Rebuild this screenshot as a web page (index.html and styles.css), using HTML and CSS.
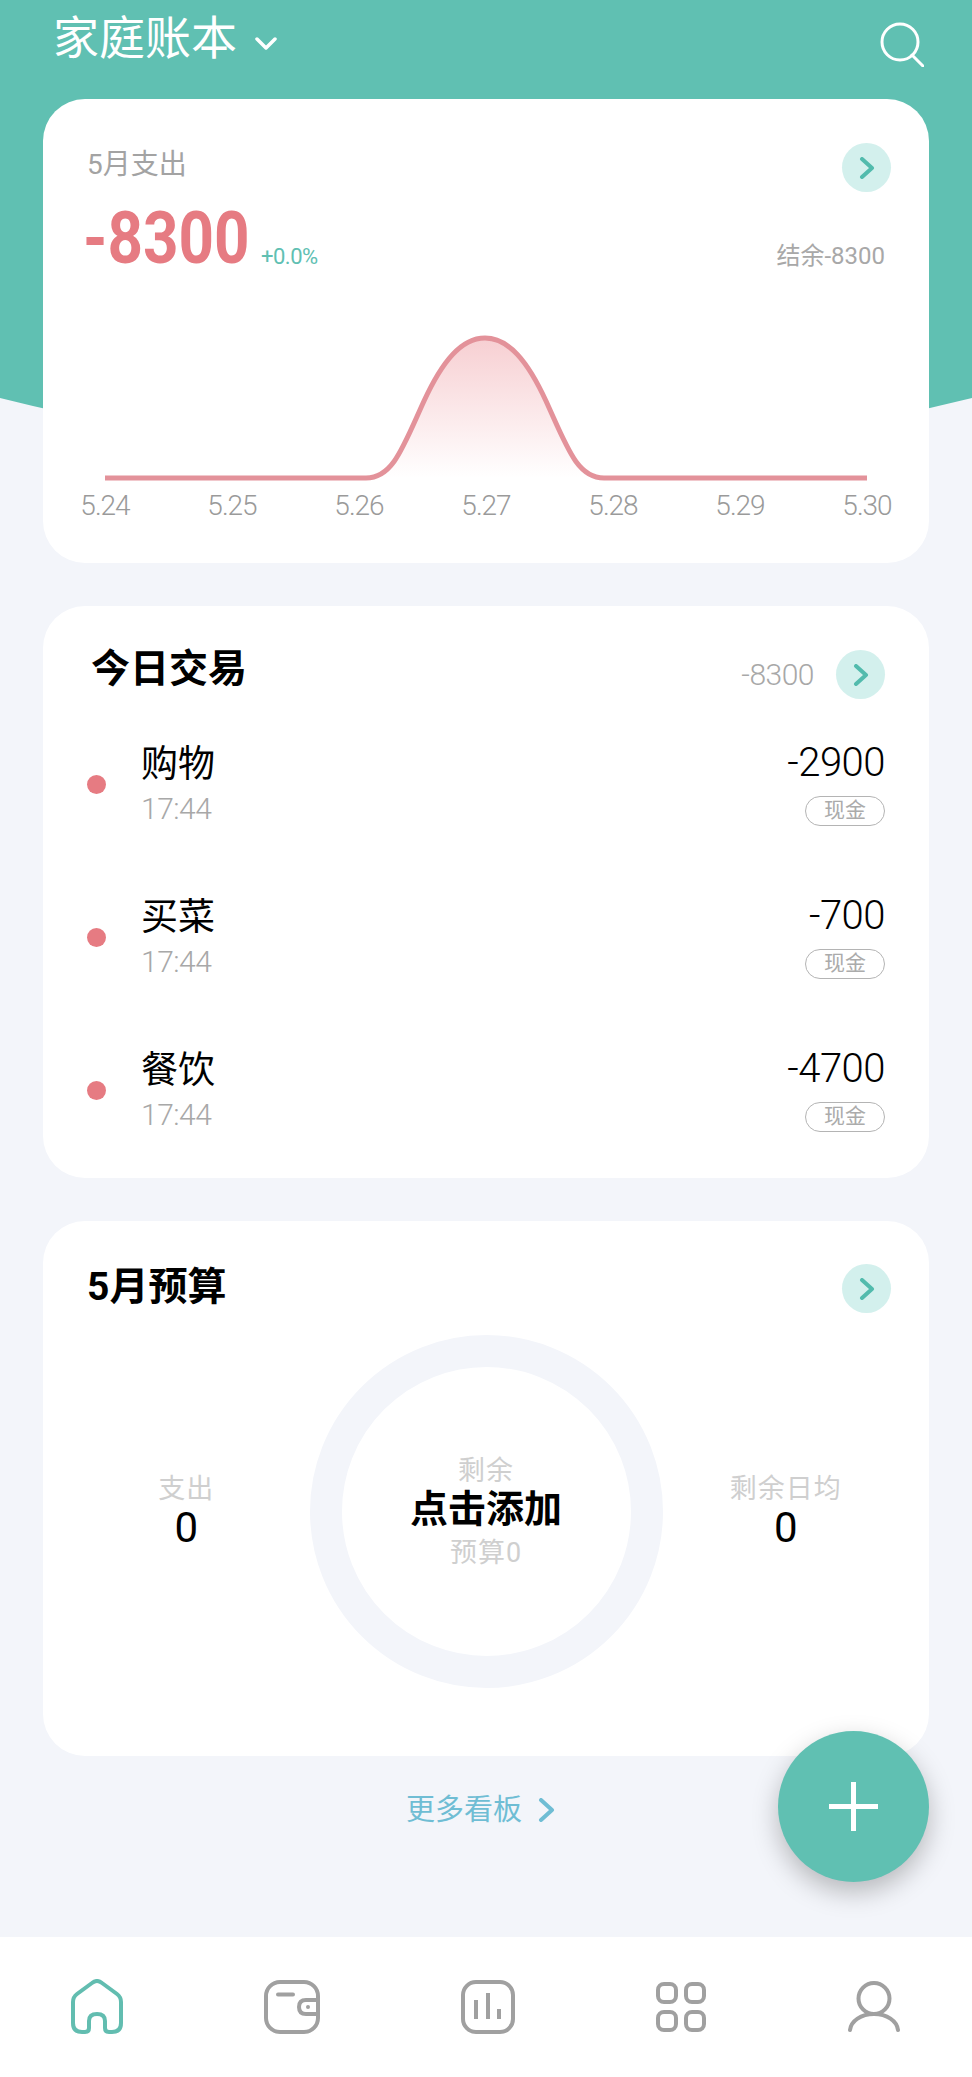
FILE: index.html
```html
<!DOCTYPE html>
<html>
  <head>
    <title>家庭账本</title>
    <link rel="stylesheet" href="styles.css">
  </head>
  <body>
    <svg class="head-bg" viewBox="0 0 972 520" width="972" height="520">
      <path d="M0 0H972V398Q486 520 0 398Z" fill="#60c0b2" />
    </svg>

    <div class="page">
      <!-- Top bar -->
      <div class="topbar">
        <div class="book">
          <span class="book-name">家庭账本</span>
          <svg class="book-arrow" viewBox="0 0 22 13" width="22" height="13">
            <path d="M2 2L11 11L20 2" fill="none" stroke="#fff" stroke-width="3.5" stroke-linecap="round" stroke-linejoin="round" />
          </svg>
        </div>
        <svg class="search" viewBox="0 0 44 45" width="44" height="45">
          <circle cx="20" cy="20" r="18" fill="none" stroke="#fff" stroke-width="3" />
          <path d="M32 33L43 44" fill="none" stroke="#fff" stroke-width="3" stroke-linecap="round" />
        </svg>
      </div>

      <!-- Month summary -->
      <div class="card card-month">
        <div class="month-head">
          <span class="label">5月支出</span>
          <span class="go">
            <svg viewBox="0 0 16 22" width="16" height="22"><path d="M3 2L13 11L3 20" /></svg>
          </span>
        </div>
        <div class="month-sum">
          <span class="big-num">-8300</span>
          <span class="rate">+0.0%</span>
          <span class="balance">结余-8300</span>
        </div>
        <svg class="trend" viewBox="0 0 790 160" width="790" height="160">
          <defs>
            <linearGradient id="trend-fill" x1="0" y1="0" x2="0" y2="1">
              <stop offset="0" stop-color="#f7cfd2" />
              <stop offset="1" stop-color="#ffffff" />
            </linearGradient>
          </defs>
          <path d="M261 143C288 143 298 112 319 66C337 27 356 3 380 3C404 3 423 27 441 66C462 112 472 143 499 143Z" fill="url(#trend-fill)" />
          <path d="M0 143H261C288 143 298 112 319 66C337 27 356 3 380 3C404 3 423 27 441 66C462 112 472 143 499 143H762" fill="none" stroke="#e3929a" stroke-width="5" />
        </svg>
        <div class="days">
          <span>5.24</span>
          <span>5.25</span>
          <span>5.26</span>
          <span>5.27</span>
          <span>5.28</span>
          <span>5.29</span>
          <span>5.30</span>
        </div>
      </div>

      <!-- Today -->
      <div class="card card-today">
        <div class="today-head">
          <span class="title">今日交易</span>
          <span class="today-sum">-8300</span>
          <span class="go">
            <svg viewBox="0 0 16 22" width="16" height="22"><path d="M3 2L13 11L3 20" /></svg>
          </span>
        </div>
        <div class="row">
          <span class="dot"></span>
          <div class="row-main">
            <span class="row-name">购物</span>
            <span class="row-time">17:44</span>
          </div>
          <div class="row-side">
            <span class="row-num">-2900</span>
            <span class="tag">现金</span>
          </div>
        </div>
        <div class="row">
          <span class="dot"></span>
          <div class="row-main">
            <span class="row-name">买菜</span>
            <span class="row-time">17:44</span>
          </div>
          <div class="row-side">
            <span class="row-num">-700</span>
            <span class="tag">现金</span>
          </div>
        </div>
        <div class="row">
          <span class="dot"></span>
          <div class="row-main">
            <span class="row-name">餐饮</span>
            <span class="row-time">17:44</span>
          </div>
          <div class="row-side">
            <span class="row-num">-4700</span>
            <span class="tag">现金</span>
          </div>
        </div>
      </div>

      <!-- Budget -->
      <div class="card card-budget">
        <div class="budget-head">
          <span class="title title-budget">5月预算</span>
          <span class="go">
            <svg viewBox="0 0 16 22" width="16" height="22"><path d="M3 2L13 11L3 20" /></svg>
          </span>
        </div>
        <div class="budget-body">
          <div class="stat stat-left">
            <span class="stat-label">支出</span>
            <span class="stat-num">0</span>
          </div>
          <div class="ring">
            <span class="stat-label">剩余</span>
            <span class="ring-add">点击添加</span>
            <span class="stat-label">预算0</span>
          </div>
          <div class="stat stat-right">
            <span class="stat-label">剩余日均</span>
            <span class="stat-num">0</span>
          </div>
        </div>
      </div>

      <div class="more">
        <span>更多看板</span>
        <svg viewBox="0 0 18 24" width="18" height="24">
          <path d="M3 2L14 12L3 22" fill="none" stroke="#6fbdd4" stroke-width="4" stroke-linecap="round" stroke-linejoin="round" />
        </svg>
      </div>
    </div>

    <div class="fab">
      <svg viewBox="0 0 49 49" width="49" height="49">
        <path d="M0 24.5H49M24.5 0V49" stroke="#fff" stroke-width="5" />
      </svg>
    </div>

    <!-- Bottom nav -->
    <div class="nav">
      <svg viewBox="0 0 52 55" width="52" height="55" fill="none" stroke="#62bdb0" stroke-width="4">
        <path d="M21 4Q26 0 31 4L46 15Q50 18 50 23V44Q50 53 41 53H38Q34 53 34 49V42Q34 35 26 35Q18 35 18 42V49Q18 53 14 53H11Q2 53 2 44V23Q2 18 6 15Z" stroke-linejoin="round" />
      </svg>
      <svg viewBox="0 0 56 54" width="56" height="54" fill="none" stroke="#a0a0a0" stroke-width="4">
        <rect x="2" y="2" width="52" height="50" rx="14" />
        <path d="M54 20H42Q35 20 35 27Q35 34 42 34H54" />
        <circle cx="44" cy="27" r="2" fill="#a0a0a0" stroke="none" />
        <path d="M14 14.500H29" stroke-linecap="round" />
      </svg>
      <svg viewBox="0 0 54 54" width="54" height="54" fill="none" stroke="#a0a0a0" stroke-width="4">
        <rect x="2" y="2" width="50" height="50" rx="13" />
        <path d="M15 20V39M27 13V39M38 29V39" />
      </svg>
      <svg viewBox="0 0 50 50" width="50" height="50" fill="none" stroke="#a0a0a0" stroke-width="4">
        <rect x="2" y="2" width="18" height="18" rx="6" />
        <rect x="30" y="2" width="18" height="18" rx="6" />
        <rect x="2" y="30" width="18" height="18" rx="6" />
        <rect x="30" y="30" width="18" height="18" rx="6" />
      </svg>
      <svg viewBox="0 0 54 51" width="54" height="51" fill="none" stroke="#a0a0a0" stroke-width="4" stroke-linecap="round">
        <circle cx="27" cy="17.500" r="15.500" />
        <path d="M3 49C4 40 14 33 27 33C40 33 50 40 51 49" />
      </svg>
    </div>
  </body>
</html>
```

FILE: styles.css
```css
body {
  margin: 0;
  width: 972px;
  height: 2077px;
  position: relative;
  overflow: hidden;
  background-color: #f3f5fa;
  font-family: Roboto, "Noto Sans CJK SC", sans-serif;
}

.head-bg {
  position: absolute;
  left: 0;
  top: 0;
  display: block;
}

.page {
  position: relative;
  display: flex;
  flex-direction: column;
  padding: 0 43px;
}

.topbar {
  height: 99px;
  display: flex;
  justify-content: space-between;
  padding: 15px 5px 0 10px;
  box-sizing: border-box;
}

.book {
  display: flex;
  align-items: center;
  height: 46px;
  gap: 18px;
}

.book-name {
  color: #fff;
  font-size: 46px;
  line-height: 46px;
}

.book-arrow {
  margin-top: 11px;
}

.search {
  margin-top: 7px;
}

.card {
  background: #fff;
  border-radius: 42px;
}

.go {
  width: 49px;
  height: 49px;
  border-radius: 50%;
  background: #d3f0ed;
  display: flex;
  align-items: center;
  justify-content: center;
}

.go svg {
  fill: none;
  stroke: #52bbad;
  stroke-width: 4;
  stroke-linecap: round;
  stroke-linejoin: round;
}

.label {
  font-size: 28px;
  line-height: 30px;
  margin-bottom: 5px;
  color: #a3a3a3;
}

/* month card */
.card-month {
  height: 464px;
  padding: 44px 38px 0 44px;
  box-sizing: border-box;
  display: flex;
  flex-direction: column;
}

.month-head {
  display: flex;
  justify-content: space-between;
  align-items: center;
}

.month-sum {
  display: flex;
  align-items: flex-end;
  height: 53px;
  margin-top: 20px;
}

.big-num {
  width: 176px;
  margin-left: -4px;
  padding-right: 2px;
  font-size: 72px;
  line-height: 53px;
  font-weight: bold;
  white-space: nowrap;
  color: #e67b82;
  transform: scaleX(0.86);
  transform-origin: left center;
}

.rate {
  font-size: 22px;
  line-height: 17px;
  letter-spacing: -0.5px;
  color: #60c0b2;
}

.balance {
  margin-left: auto;
  margin-right: 6px;
  font-size: 24px;
  line-height: 22px;
  margin-bottom: -2px;
  color: #a8a8a8;
}

.trend {
  display: block;
  margin: 70px 0 0 18px;
}

.days {
  display: flex;
  justify-content: space-between;
  width: 826px;
  margin-left: -14px;
  font-size: 28px;
  font-weight: 300;
  line-height: 22px;
  letter-spacing: -1px;
  color: #9a9a9a;
  text-align: center;
}

.days span {
  width: 64px;
}

/* today card */
.card-today {
  height: 572px;
  margin-top: 43px;
  padding: 44px 44px 0 50px;
  box-sizing: border-box;
}

.today-head {
  display: flex;
  align-items: center;
  gap: 22px;
  margin-bottom: 5px;
}

.title {
  margin-left: -2px;
  font-size: 39px;
  line-height: 38px;
  margin-bottom: 11px;
  font-weight: bold;
  color: #000;
}

.title-budget {
  margin-left: 0;
  line-height: 46px;
  margin-bottom: 3px;
}

.today-sum {
  margin-left: auto;
  font-size: 30px;
  font-weight: 300;
  letter-spacing: -0.5px;
  color: #a8a8a8;
}

.row {
  display: flex;
  align-items: center;
  height: 153px;
  margin-left: -6px;
}

.dot {
  width: 19px;
  height: 19px;
  border-radius: 50%;
  background: #e67b82;
  margin: 8px 35px 0 0;
}

.row-main {
  display: flex;
  flex-direction: column;
  gap: 8px;
  margin-top: 4px;
}

.row-name {
  font-size: 37px;
  line-height: 44px;
  color: #000;
}

.row-time {
  font-size: 30px;
  font-weight: 300;
  line-height: 28px;
  letter-spacing: -0.5px;
  color: #a8a8a8;
}

.row-side {
  margin-left: auto;
  margin-top: 5px;
  display: flex;
  flex-direction: column;
  align-items: flex-end;
  gap: 11px;
}

.row-num {
  font-size: 40px;
  font-weight: 300;
  line-height: 44px;
  letter-spacing: -0.5px;
  color: #000;
}

.tag {
  width: 80px;
  height: 30px;
  box-sizing: border-box;
  border: 1px solid #b4b4b4;
  border-radius: 15px;
  font-size: 21px;
  line-height: 27px;
  text-align: center;
  color: #ababab;
}

/* budget card */
.card-budget {
  height: 535px;
  margin-top: 43px;
  padding: 43px 38px 0 44px;
  box-sizing: border-box;
}

.budget-head {
  display: flex;
  justify-content: space-between;
  align-items: center;
}

.budget-body {
  display: grid;
  grid-template-columns: 1fr 353px 1fr;
  align-items: center;
  margin: 22px -38px 0 -44px;
}

.stat {
  display: flex;
  flex-direction: column;
  align-items: center;
}

.stat-left {
  padding-left: 20px;
}

.stat-right {
  padding-right: 20px;
}

.stat-label {
  font-size: 27px;
  line-height: 32px;
  letter-spacing: 1px;
  color: #cfcfcf;
}

.stat-num {
  font-size: 42px;
  line-height: 46px;
  color: #000;
}

.ring {
  width: 353px;
  height: 353px;
  box-sizing: border-box;
  border: 32px solid #f3f5fa;
  border-radius: 50%;
  display: flex;
  flex-direction: column;
  align-items: center;
  justify-content: center;
}

.ring-add {
  margin: -3px 0 3px;
  font-size: 38px;
  line-height: 50px;
  font-weight: bold;
  color: #000;
}

.more {
  display: flex;
  justify-content: center;
  align-items: center;
  gap: 16px;
  margin: 37px 0 0 -10px;
  font-size: 29px;
  line-height: 34px;
  color: #6fbdd4;
}

.fab {
  position: absolute;
  left: 778px;
  top: 1731px;
  width: 151px;
  height: 151px;
  border-radius: 50%;
  background: #60c0b2;
  box-shadow: 0 10px 26px rgba(0, 0, 0, 0.25);
  display: flex;
  align-items: center;
  justify-content: center;
}

.nav {
  position: absolute;
  left: 0;
  top: 1937px;
  width: 972px;
  height: 140px;
  box-sizing: border-box;
  background: #fff;
  padding: 42px 71px 43px;
  display: flex;
  justify-content: space-between;
  align-items: center;
}
```
